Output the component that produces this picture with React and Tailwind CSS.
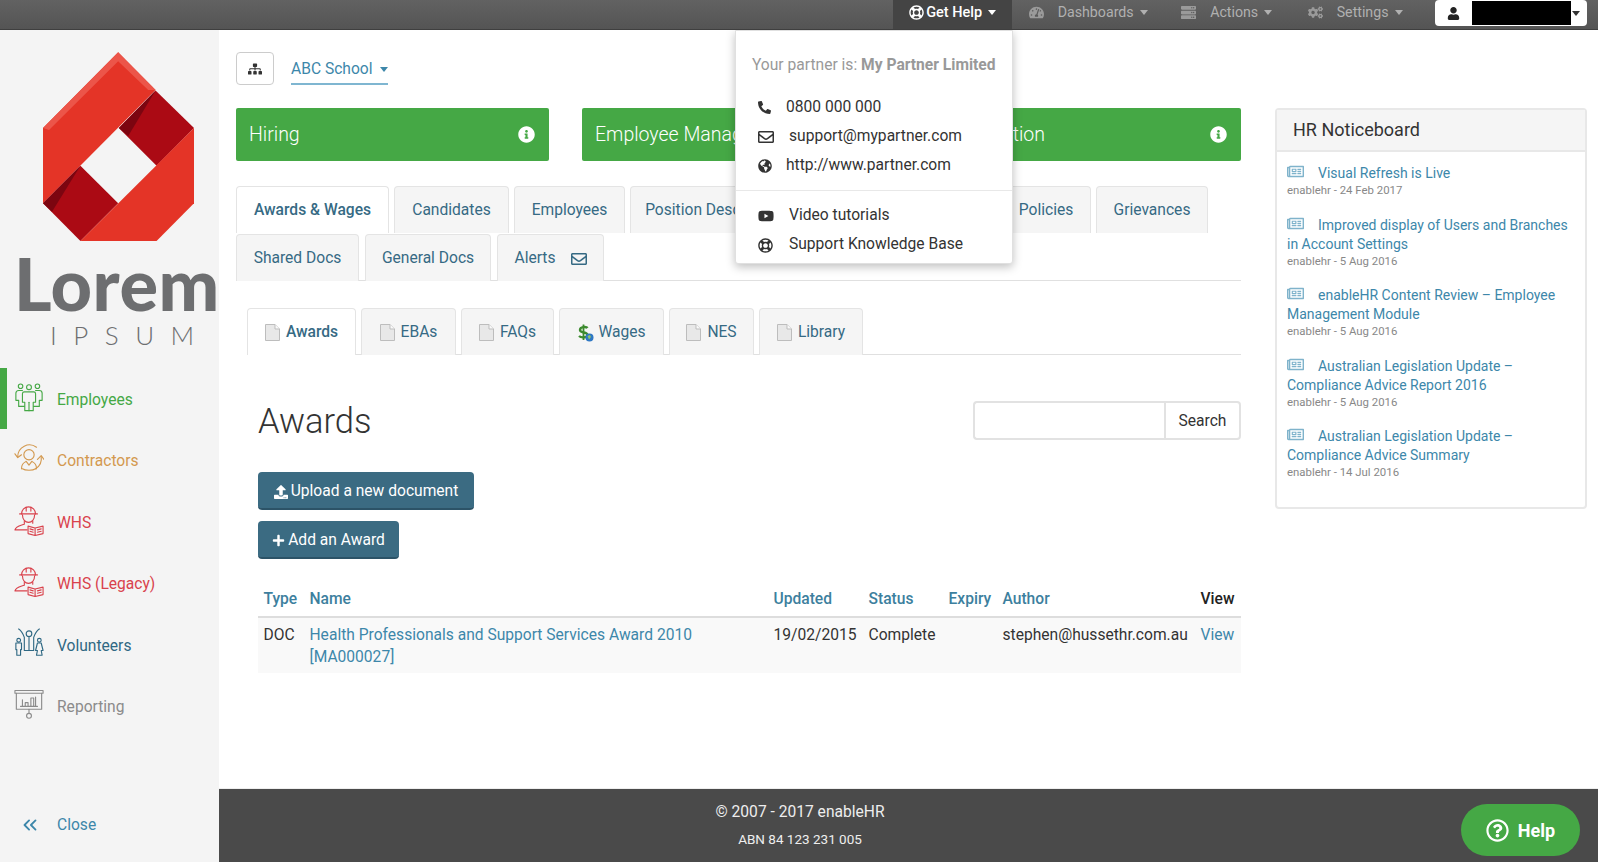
// Awards page of the HR portal, with the Get Help menu open
import {
  FaSitemap, FaInfoCircle, FaRegLifeRing, FaTachometerAlt, FaServer, FaCogs, FaUser,
  FaPhoneAlt, FaRegEnvelope, FaGlobeAmericas, FaYoutube, FaUpload, FaPlus,
  FaRegNewspaper, FaRegQuestionCircle,
} from 'react-icons/fa'
import { ChevronsLeft } from 'lucide-react'

const ROBOTO = 'font-["Roboto",sans-serif]'

const Caret = ({ className = '' }) => (
  <span className={`inline-block w-0 h-0 border-x-[4.5px] border-x-transparent border-t-[5px] border-t-current ${className}`} />
)

const LINE_ICON = {
  viewBox: '0 0 32 32',
  fill: 'none',
  stroke: 'currentColor',
  strokeWidth: 1.2,
  strokeLinecap: 'round',
  strokeLinejoin: 'round',
  width: 31,
  height: 31,
}

const PeopleIcon = () => (
  <svg {...LINE_ICON}>
    <circle cx="7" cy="4" r="2.4" />
    <circle cx="16" cy="5" r="2.6" />
    <circle cx="25" cy="4" r="2.4" />
    <path d="M11 10 H21 C22 10 23 11 23 12 V21 H20.5 V30 H11.5 V21 H9 V12 C9 11 10 10 11 10 Z" />
    <path d="M9 8.5 H5 C3 8.5 2 10 2 11.5 V19 H5 V25.5 H11" />
    <path d="M23 8.5 H27 C29 8.5 30 10 30 11.5 V19 H27 V25.5 H21" />
    <path d="M16 21 V30" />
  </svg>
)

const ContractorIcon = () => (
  <svg {...LINE_ICON} width="34" height="31">
    <circle cx="16" cy="12" r="5.5" />
    <path d="M8 27 C8 22 10 21 13 19 M24 27 C24 22 22 21 19 19 M13 19 L16 23 L19 19 M9 27 C12 29 20 29 23 27" />
    <path d="M4 14 A12.5 12.5 0 0 1 24 4" />
    <path d="M1 11 L4 15 L8 12" />
    <path d="M29 14 A13 13 0 0 1 23 27" />
    <path d="M25 17 L29 13 L32 17" />
  </svg>
)

const WorkerIcon = () => (
  <svg {...LINE_ICON} height="32" viewBox="0 0 32 33">
    <path d="M8 10 A7.5 7.5 0 0 1 23 10" />
    <path d="M6 10 H25 M13 3 V7 M18 3 V7" />
    <path d="M9 11 C9 16 12 19 15.5 19 C19 19 22 16 22 11" />
    <path d="M11 18 V21 C7 22.5 2 23 1 27 H14" />
    <path d="M20 18 V20" />
    <path d="M15 23 L22.5 25 L31 23 V31 L22.5 33 L15 31 Z M22.5 25 V33" />
    <path d="M17 26 L20.5 27 M17 28.5 L20.5 29.5 M25 27 L29 26 M25 29.5 L29 28.5" />
  </svg>
)

const VolunteersIcon = () => (
  <svg {...LINE_ICON} height="30">
    <circle cx="16" cy="6" r="3" />
    <path d="M5 1 C8 3 10 7 11 10 V24 H21 V10 C22 7 24 3 27 1" />
    <path d="M16 10 V24" />
    <circle cx="5" cy="13" r="2" />
    <path d="M2 16 H8 V23 H7 V29 H3 V23 H2 Z" />
    <circle cx="27" cy="13" r="2" />
    <path d="M25 16 H29 L31 24 H29 L30 29 H24 L25 24 H23 Z" />
  </svg>
)

const ReportingIcon = () => (
  <svg {...LINE_ICON} height="31">
    <rect x="1" y="1" width="30" height="3" />
    <path d="M2.5 4 V21 H29.5 V4" />
    <path d="M7 18 H25 M9 18 V11 M12 18 V14 H15 V18 M18 18 V9 H21 V18 M23 18 V8" />
    <path d="M16 21 V25" />
    <circle cx="16" cy="28" r="2.6" />
  </svg>
)

const NAV = [
  { label: 'Employees', Icon: PeopleIcon, color: 'text-[#45a845]', active: true },
  { label: 'Contractors', Icon: ContractorIcon, color: 'text-[#d3994f]' },
  { label: 'WHS', Icon: WorkerIcon, color: 'text-[#d9424c]' },
  { label: 'WHS (Legacy)', Icon: WorkerIcon, color: 'text-[#d9424c]' },
  { label: 'Volunteers', Icon: VolunteersIcon, color: 'text-[#2f6883]' },
  { label: 'Reporting', Icon: ReportingIcon, color: 'text-[#8b8b8b]' },
]

const LogoMark = () => (
  <svg viewBox="130 155 452 565" width="151" height="189">
    <polygon points="355,155 467,268 130,607 130,382" fill="#e43427" />
    <polygon points="355,155 467,268 445,268 355,182 148,388 130,382" fill="#ec5549" />
    <polygon points="467,270 582,382 470,495 357,382" fill="#ab0a14" />
    <polygon points="467,270 357,382 385,406" fill="#7c0510" />
    <polygon points="242,495 355,607 242,720 130,607" fill="#ab0a14" />
    <polygon points="242,495 130,607 157,633" fill="#7c0510" />
    <polygon points="582,382 582,607 470,720 242,720" fill="#e43427" />
  </svg>
)

function Sidebar() {
  return (
    <aside className="w-[219px] shrink-0 bg-[#f4f4f4] flex flex-col overflow-hidden">
      <div className="ml-[43px] mt-[22px] h-[189px]">
        <LogoMark />
      </div>
      <div className='ml-[14px] mt-[6px] h-[72px] font-["Lato",sans-serif] font-black text-[72px] leading-[72px] tracking-[0.5px] text-[#6d6e70] whitespace-nowrap'>
        Lorem
      </div>
      <div className='ml-[50px] mt-[1px] h-[30px] font-["Lato",sans-serif] font-light text-[26px] leading-[30px] tracking-[16.5px] text-[#6d6e70] whitespace-nowrap'>
        IPSUM
      </div>
      <nav className="mt-[18px]">
        {NAV.map(({ label, Icon, color, active }) => (
          <div
            key={label}
            className={`h-[61.4px] flex items-center border-l-[7px] pl-[7px] ${color} ${active ? 'border-[#45a845]' : 'border-transparent'}`}
          >
            <span className="w-[30px] mb-[3px] flex justify-center shrink-0"><Icon /></span>
            <span className="ml-[13px] text-[15.6px] pt-[4px]">{label}</span>
          </div>
        ))}
      </nav>
      <div className="mt-auto h-[74px] flex items-center pl-[19px] text-[#3d87aa]">
        <ChevronsLeft size={22} strokeWidth={2} />
        <span className="ml-[16px] pt-[2px] text-[15.6px]">Close</span>
      </div>
    </aside>
  )
}

function TopItem({ Icon, label, className = '' }) {
  return (
    <div className={`flex items-center pb-[4px] text-[#b0b0b0] text-[14.2px] ${className}`}>
      <Icon size={15} className="text-[#9a9a9a]" />
      <span className="ml-[14px]">{label}</span>
      <Caret className="ml-[6px] text-[#b0b0b0]" />
    </div>
  )
}

function TopBar() {
  return (
    <header className="h-[30px] shrink-0 bg-gradient-to-b from-[#626262] to-[#545454] border-b border-[#3f3f3f] flex justify-end relative z-20">
      <div className="w-[119px] bg-[#444444] flex items-center pl-[16px] pb-[4px] text-white text-[14.5px] font-medium">
        <FaRegLifeRing size={15} />
        <span className="ml-[2px]">Get Help</span>
        <Caret className="ml-[6px]" />
      </div>
      <TopItem Icon={FaTachometerAlt} label="Dashboards" className="ml-[16.5px]" />
      <TopItem Icon={FaServer} label="Actions" className="ml-[33.5px]" />
      <TopItem Icon={FaCogs} label="Settings" className="ml-[35.5px]" />
      <div className="ml-[32.5px] mr-[11px] w-[152px] h-[26px] bg-white rounded-[4px] flex items-center pl-[12px] text-[#222]">
        <FaUser size={13} />
        <span className="ml-[12px] w-[99px] h-[24px] bg-black" />
        <Caret className="ml-[1px] text-[#333]" />
      </div>
    </header>
  )
}

function HelpMenu() {
  const rowClass = 'flex items-center text-[15.6px] text-[#333] h-[29px]'
  return (
    <div className="absolute left-[735px] top-[30px] w-[278px] h-[234px] bg-white border border-[#e0e0e0] rounded-b-[3px] shadow-[0_3px_10px_rgba(0,0,0,0.25)] z-10">
      <p className="ml-[16px] mt-[23px] text-[15.6px] leading-[22px] text-[#999999] whitespace-nowrap">
        Your partner is: <span className="font-bold">My Partner Limited</span>
      </p>
      <div className="mt-[17px] ml-[22px]">
        <div className={rowClass}><FaPhoneAlt size={13} /><span className="ml-[15px]">0800 000 000</span></div>
        <div className={rowClass}><FaRegEnvelope size={16} /><span className="ml-[15px]">support@mypartner.com</span></div>
        <div className={rowClass}><FaGlobeAmericas size={14} /><span className="ml-[14px]">http://www.partner.com</span></div>
      </div>
      <div className="mt-[10px] border-t border-[#e8e8e8]" />
      <div className="mt-[10.5px] ml-[22px]">
        <div className={rowClass}><FaYoutube size={16} /><span className="ml-[15px]">Video tutorials</span></div>
        <div className={rowClass}><FaRegLifeRing size={15} /><span className="ml-[16px]">Support Knowledge Base</span></div>
      </div>
    </div>
  )
}

const CARDS = [
  { title: 'Hiring', pad: 'pl-[13px]' },
  { title: 'Employee Management', pad: 'pl-[13px]' },
  { title: 'Information', pad: 'pl-[17px]' },
]

// The tab with no label lies wholly under the open Get Help menu
const TAB_ROWS = [
  [
    { label: 'Awards & Wages', w: 'w-[153px]', active: true },
    { label: 'Candidates', w: 'w-[115px]' },
    { label: 'Employees', w: 'w-[111px]' },
    { label: 'Position Descriptions', w: 'w-[178px]' },
    { label: '', w: 'w-[183px]' },
    { label: 'Policies', w: 'w-[90px]' },
    { label: 'Grievances', w: 'w-[112px]' },
  ],
  [
    { label: 'Shared Docs', w: 'w-[123px]' },
    { label: 'General Docs', w: 'w-[126px]' },
    { label: 'Alerts', w: 'w-[107px]', mail: true },
  ],
]

const PageIcon = () => (
  <svg width="15" height="17" viewBox="0 0 15 17" className="shrink-0">
    <path d="M0.5 0.5 H10 L14.5 5 V16.5 H0.5 Z" fill="#e8e8e8" stroke="#bdbdbd" />
    <path d="M10 0.5 V5 H14.5" fill="#fafafa" stroke="#bdbdbd" />
  </svg>
)

const WagesIcon = () => (
  <svg width="17" height="18" viewBox="0 0 17 18" className="shrink-0 -mr-[2px]">
    <path d="M10.5 4 C9.5 2.5 3 2.5 3 6 C3 9.5 10.5 7.5 10.5 11 C10.5 14 4 14 2 12" fill="none" stroke="#3c8a2e" strokeWidth="2.4" />
    <path d="M6.5 0.5 V16" stroke="#3c8a2e" strokeWidth="1.8" />
    <circle cx="12.5" cy="13.5" r="4" fill="#2f78c4" />
    <path d="M10.5 12 L13 11 L14 13 L12 15.5 Z" fill="#8fc36a" />
  </svg>
)

const SUB_TABS = [
  { label: 'Awards', w: 'w-[109px]', active: true },
  { label: 'EBAs', w: 'w-[95px]' },
  { label: 'FAQs', w: 'w-[93px]' },
  { label: 'Wages', w: 'w-[105px]', wages: true },
  { label: 'NES', w: 'w-[85px]' },
  { label: 'Library', w: 'w-[104px]' },
]

function Tab({ w, active, children }) {
  return (
    <div
      className={`${w} h-[47px] -mb-px pt-[1px] shrink-0 flex items-center justify-center gap-[6px] border border-b-0 border-[#e4e4e4] rounded-t-[4px] text-[15.6px] text-[#366a84] whitespace-nowrap overflow-hidden ${active ? 'bg-white font-medium relative z-[1]' : 'bg-[#f5f5f5]'}`}
    >
      {children}
    </div>
  )
}

const DOC_ROW = {
  name: 'Health Professionals and Support Services Award 2010 [MA000027]',
  updated: '19/02/2015',
  status: 'Complete',
  author: 'stephen@hussethr.com.au',
}

function AwardsTable() {
  return (
    <table className="mt-[23px] w-full table-fixed text-[15.6px] leading-[22px] border-collapse">
      <colgroup>
        <col className="w-[46px]" />
        <col className="w-[464px]" />
        <col className="w-[95px]" />
        <col className="w-[80px]" />
        <col className="w-[54px]" />
        <col className="w-[198px]" />
        <col className="w-[46px]" />
      </colgroup>
      <thead>
        <tr className="border-b-2 border-[#dddddd] text-left text-[#3d7f9e] font-medium">
          {['Type', 'Name', 'Updated', 'Status', 'Expiry', 'Author'].map((h) => (
            <th key={h} className="px-[5.5px] pt-[6px] pb-[6px] font-medium whitespace-nowrap">{h}</th>
          ))}
          <th className="px-[5.5px] pt-[6px] pb-[6px] font-medium text-[#222]">View</th>
        </tr>
      </thead>
      <tbody>
        <tr className="bg-[#f9f9f9] align-top text-[#333]">
          <td className="px-[5.5px] pt-[6px] pb-[5px]">DOC</td>
          <td className="px-[5.5px] pt-[6px] pb-[5px] text-[#3d87aa]">{DOC_ROW.name}</td>
          <td className="px-[5.5px] pt-[6px] pb-[5px] whitespace-nowrap">{DOC_ROW.updated}</td>
          <td className="px-[5.5px] pt-[6px] pb-[5px]">{DOC_ROW.status}</td>
          <td className="px-[5.5px] pt-[6px] pb-[5px]" />
          <td className="px-[5.5px] pt-[6px] pb-[5px] whitespace-nowrap">{DOC_ROW.author}</td>
          <td className="px-[5.5px] pt-[6px] pb-[5px] text-[#3d87aa]">View</td>
        </tr>
      </tbody>
    </table>
  )
}

const NOTICES = [
  { title: 'Visual Refresh is Live', meta: 'enablehr - 24 Feb 2017' },
  { title: 'Improved display of Users and Branches in Account Settings', meta: 'enablehr - 5 Aug 2016' },
  { title: 'enableHR Content Review – Employee Management Module', meta: 'enablehr - 5 Aug 2016' },
  { title: 'Australian Legislation Update – Compliance Advice Report 2016', meta: 'enablehr - 5 Aug 2016' },
  { title: 'Australian Legislation Update – Compliance Advice Summary', meta: 'enablehr - 14 Jul 2016' },
]

function Noticeboard() {
  return (
    <section className="ml-[34px] mt-[78px] w-[312px] h-[401px] shrink-0 border-2 border-[#e8e8e8] rounded-[4px] bg-white">
      <h3 className="h-[42px] bg-[#f5f5f5] border-b-2 border-[#e8e8e8] pl-[16px] text-[18px] leading-[39px] font-normal text-[#333]">
        HR Noticeboard
      </h3>
      <div className="px-[10px] pt-[11px]">
        {NOTICES.map((n) => (
          <div key={n.title} className="mb-[16.5px]">
            <p className="text-[14px] leading-[19px] text-[#3d87aa]">
              <FaRegNewspaper size={17} className="inline-block mr-[14px] align-[-2px] text-[#7fb3cb]" />
              {n.title}
            </p>
            <p className="text-[11.4px] leading-[15px] text-[#888888]">{n.meta}</p>
          </div>
        ))}
      </div>
    </section>
  )
}

export default function App() {
  return (
    <div className={`relative h-[862px] w-[1598px] overflow-hidden flex flex-col bg-white text-[#333] ${ROBOTO}`}>
      <TopBar />
      <HelpMenu />
      <div className="flex flex-1 min-h-0">
        <Sidebar />
        <div className="flex-1 min-w-0 flex flex-col">
          <main className="flex-1 min-h-0 flex pl-[17px]">
            <div className="w-[1005px] shrink-0">
              <div className="mt-[22px] flex items-center h-[33px]">
                <div className="w-[38px] h-[33px] border border-[#cccccc] rounded-[4px] flex items-center justify-center text-[#333]">
                  <FaSitemap size={14} />
                </div>
                <div className="ml-[17px] h-[33px] w-[97px] pt-[4px] border-b-2 border-[#7fb6d1] flex items-center whitespace-nowrap text-[15.6px] text-[#3d87aa]">
                  ABC School
                  <Caret className="ml-[7px]" />
                </div>
              </div>

              <div className="mt-[23px] grid grid-cols-3 gap-[33px]">
                {CARDS.map((c) => (
                  <div key={c.title} className={`h-[53px] bg-[#45a845] rounded-[2px] flex items-center justify-between pr-[14px] text-white text-[19.5px] font-light whitespace-nowrap ${c.pad}`}>
                    {c.title}
                    <FaInfoCircle size={17} />
                  </div>
                ))}
              </div>

              <div className="mt-[25px] border-b border-[#e0e0e0]">
                {TAB_ROWS.map((row, i) => (
                  <div key={i} className={`flex ${i > 0 ? 'mt-[2px] gap-[6px]' : 'gap-[5px]'}`}>
                    {row.map((t, j) => (
                      <Tab key={j} w={t.w} active={t.active}>
                        {t.label}
                        {t.mail && <FaRegEnvelope size={16} className="ml-[9px]" />}
                      </Tab>
                    ))}
                  </div>
                ))}
              </div>

              <div className="mt-[27px] ml-[11px] flex gap-[5px] border-b border-[#e0e0e0]">
                {SUB_TABS.map((t) => (
                  <Tab key={t.label} w={t.w} active={t.active}>
                    {t.wages ? <WagesIcon /> : <PageIcon />}
                    {t.label}
                  </Tab>
                ))}
              </div>

              <div className="ml-[22px] mt-[46px]">
                <div className="flex items-start justify-between">
                  <h1 className="text-[34.5px] leading-[40px] font-light text-[#333]">Awards</h1>
                  <div className="flex h-[39px]">
                    <div className="w-[191px] border-2 border-r-0 border-[#e2e2e2] rounded-l-[4px] bg-white" />
                    <div className="w-[77px] pt-[3px] border-2 border-[#e2e2e2] rounded-r-[4px] flex items-center justify-center text-[15.6px] text-[#333]">Search</div>
                  </div>
                </div>
                <div className="mt-[31px] flex flex-col items-start gap-[11px]">
                  <button className="w-[216px] h-[38px] pt-[3px] bg-[#3b6b82] border-b-2 border-[#2c5367] rounded-[4px] flex items-center justify-center gap-[3px] text-white text-[15.6px]">
                    <FaUpload size={14} />
                    Upload a new document
                  </button>
                  <button className="w-[141px] h-[38px] pt-[3px] bg-[#3b6b82] border-b-2 border-[#2c5367] rounded-[4px] flex items-center justify-center gap-[3px] text-white text-[15.6px]">
                    <FaPlus size={13} />
                    Add an Award
                  </button>
                </div>
                <AwardsTable />
              </div>
            </div>
            <Noticeboard />
          </main>
          <footer className="h-[74px] shrink-0 bg-[#4a4a4a] text-[#eeeeee] border-t border-[#eeeeee]">
            <div className="w-[1162px] text-center">
              <p className="mt-[13px] text-[15.6px] leading-[20px]">© 2007 - 2017 enableHR</p>
              <p className="mt-[7px] text-[13.5px] leading-[20px]">ABN 84 123 231 005</p>
            </div>
          </footer>
        </div>
      </div>
      <div className="absolute left-[1461px] top-[804px] w-[119px] h-[52px] rounded-full bg-[#45a845] text-white flex items-center justify-center gap-[9px] font-bold text-[18px]">
        <FaRegQuestionCircle size={23} />
        Help
      </div>
    </div>
  )
}
